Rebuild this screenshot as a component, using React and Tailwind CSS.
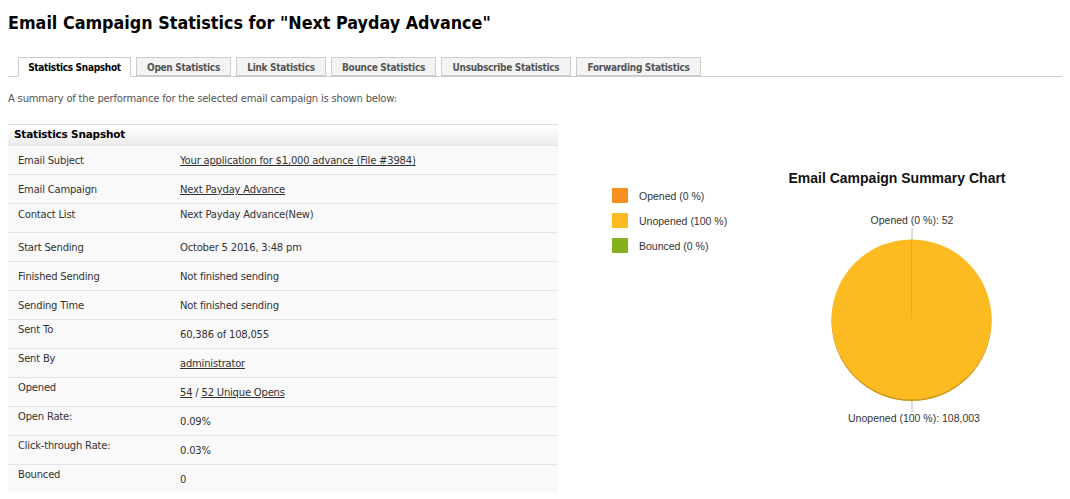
import React from "react";

const tabs = [
  { label: "Statistics Snapshot", w: "w-[113px]", active: true },
  { label: "Open Statistics", w: "w-[95px]" },
  { label: "Link Statistics", w: "w-[90px]" },
  { label: "Bounce Statistics", w: "w-[105px]" },
  { label: "Unsubscribe Statistics", w: "w-[130px]" },
  { label: "Forwarding Statistics", w: "w-[125px]" },
];

const rows = [
  { label: "Email Subject", value: <a className="underline">Your application for $1,000 advance (File #3984)</a>, lp: "pt-[8px]", vp: "pt-[8px]" },
  { label: "Email Campaign", value: <a className="underline">Next Payday Advance</a>, lp: "pt-[8px]", vp: "pt-[8px]" },
  { label: "Contact List", value: "Next Payday Advance(New)", lp: "pt-[4px]", vp: "pt-[4px]" },
  { label: "Start Sending", value: "October 5 2016, 3:48 pm", lp: "pt-[8px]", vp: "pt-[8px]" },
  { label: "Finished Sending", value: "Not finished sending", lp: "pt-[8px]", vp: "pt-[8px]" },
  { label: "Sending Time", value: "Not finished sending", lp: "pt-[8px]", vp: "pt-[8px]" },
  { label: "Sent To", value: "60,386 of 108,055", lp: "pt-[3px]", vp: "pt-[8px]" },
  { label: "Sent By", value: <a className="underline">administrator</a>, lp: "pt-[3px]", vp: "pt-[8px]" },
  { label: "Opened", value: <><a className="underline">54</a> / <a className="underline">52 Unique Opens</a></>, lp: "pt-[3px]", vp: "pt-[8px]" },
  { label: "Open Rate:", value: "0.09%", lp: "pt-[3px]", vp: "pt-[8px]" },
  { label: "Click-through Rate:", value: "0.03%", lp: "pt-[3px]", vp: "pt-[8px]" },
  { label: "Bounced", value: "0", lp: "pt-[3px]", vp: "pt-[8px]" },
];

const cond = { fontFamily: "'DejaVu Sans Condensed', 'DejaVu Sans', Verdana, sans-serif" };

function Chart() {
  const cx = 321.5;
  const cy = 195.5;
  const r = 80;
  return (
    <svg width="480" height="310" viewBox="0 0 480 310" className="block">
      <rect x="22" y="64" width="16" height="15" fill="#f7901e" />
      <rect x="22" y="89" width="16" height="15" fill="#fdbb21" />
      <rect x="22" y="114" width="16" height="15" fill="#84b11c" />
      <g fontFamily="'Liberation Sans', Arial, sans-serif" fontSize="10.5" fill="#333">
        <text x="49" y="75.5">Opened (0 %)</text>
        <text x="49" y="100.5">Unopened (100 %)</text>
        <text x="49" y="125.5">Bounced (0 %)</text>
      </g>
      <text x="307" y="58.5" textAnchor="middle" fontFamily="'Liberation Sans', Arial, sans-serif" fontSize="14" fontWeight="bold" fill="#111">
        Email Campaign Summary Chart
      </text>
      <g fontFamily="'Liberation Sans', Arial, sans-serif" fontSize="10.5" fill="#333">
        <text x="322" y="100" textAnchor="middle">Opened (0 %): 52</text>
        <text x="324" y="298" textAnchor="middle">Unopened (100 %): 108,003</text>
      </g>
      <line x1="322" y1="104" x2="322" y2="118" stroke="#bbb" strokeWidth="1" />
      <line x1="322" y1="275" x2="322" y2="288" stroke="#bbb" strokeWidth="1" />
      <circle cx={cx} cy={cy + 1.5} r={r} fill="#c9951b" />
      <circle cx={cx} cy={cy} r={r} fill="#fdbb21" />
      <line x1="321.5" y1="115.5" x2="321.5" y2="195" stroke="#f2a91f" strokeWidth="1" />
    </svg>
  );
}

export default function App() {
  return (
    <div className="w-[1070px] h-[499px] overflow-hidden bg-white px-2 text-[#333]" style={{ fontFamily: "'DejaVu Sans', Verdana, sans-serif" }}>
      <h1 className="pt-[12px] text-[17.8px] leading-[22px] font-bold text-black" style={cond}>
        Email Campaign Statistics for "Next Payday Advance"
      </h1>
      <div className="mt-[23px] flex items-end gap-[5px] border-b border-[#ccc] pl-[10px] h-[20px]">
        {tabs.map((t) => (
          <div
            key={t.label}
            style={cond}
            className={`${t.w} flex items-center justify-center border border-[#ccc] pt-[1px] text-[10px] tracking-[-0.3px] font-bold ${
              t.active ? "bg-white border-b-white text-black -mb-px h-[20px]" : "bg-[#f3f3f3] text-[#555] h-[19px]"
            }`}
          >
            {t.label}
          </div>
        ))}
      </div>
      <p className="mt-[15px] text-[10px] leading-[13px] text-[#555] tracking-[-0.2px]">
        A summary of the performance for the selected email campaign is shown below:
      </p>
      <div className="mt-[19px] flex">
        <div className="w-[550px] shrink-0 text-[10px] tracking-[-0.2px]">
          <div className="h-[21px] border-t border-[#ddd] bg-gradient-to-b from-white to-[#ececec] pl-[6px] flex items-center font-bold text-black text-[10.5px]">
            Statistics Snapshot
          </div>
          {rows.map((r) => (
            <div key={r.label} className="h-[29px] flex bg-[#f9f9f9] border-t border-[#e4e4e4] leading-[14px]">
              <div className={`w-[172px] pl-[10px] ${r.lp}`}>{r.label}</div>
              <div className={`flex-1 ${r.vp}`}>{r.value}</div>
            </div>
          ))}
        </div>
        <div className="ml-[32px] shrink-0">
          <Chart />
        </div>
      </div>
    </div>
  );
}
